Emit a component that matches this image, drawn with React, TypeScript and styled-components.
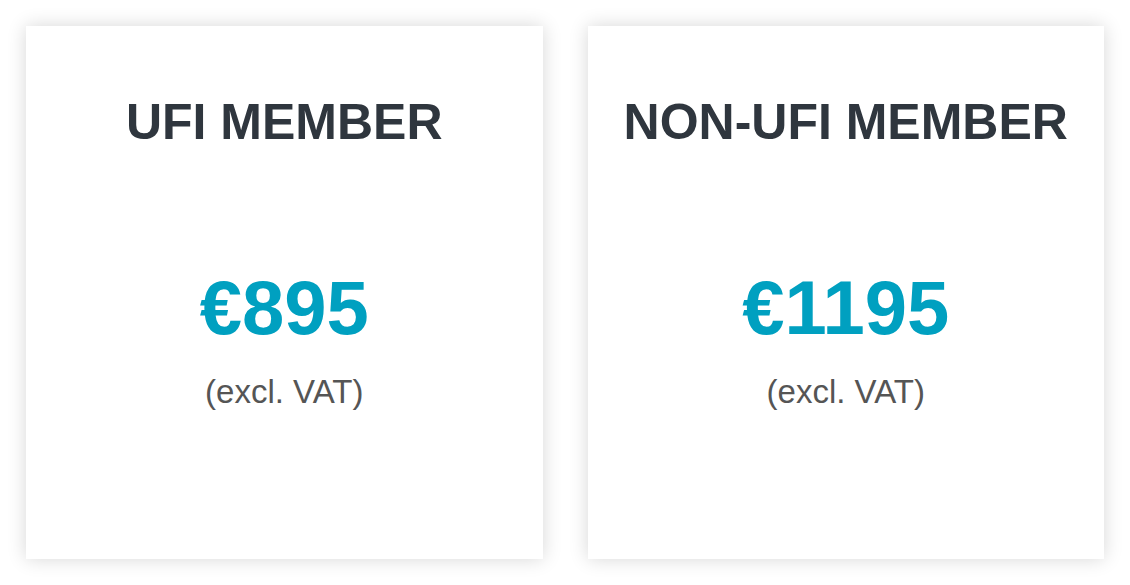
import React from 'react'
import styled, { createGlobalStyle } from 'styled-components'

const GlobalStyle = createGlobalStyle`
  body {
    margin: 0;
    background: #fff;
    font-family: "Liberation Sans", Arial, sans-serif;
  }
`

const Page = styled.div`
  display: flex;
  gap: 45px;
  padding: 26px;
`

const Card = styled.div`
  width: 517px;
  height: 533px;
  box-sizing: border-box;
  background: #fff;
  box-shadow: 0 0 18px rgba(0, 0, 0, 0.16);
  display: flex;
  flex-direction: column;
  align-items: center;
  padding-top: 66px;
`

const Title = styled.h2`
  margin: 0;
  font-size: 50px;
  line-height: 60px;
  font-weight: 700;
  color: #2f363e;
`

const Price = styled.div`
  margin-top: 110px;
  font-size: 76px;
  line-height: 91px;
  font-weight: 700;
  color: #00a0c0;
`

const Note = styled.div`
  margin-top: 20px;
  font-size: 33px;
  line-height: 38px;
  color: #555;
`

const plans = [
  { name: 'UFI MEMBER', price: '€895' },
  { name: 'NON-UFI MEMBER', price: '€1195' },
]

const App = () => {
  return (
    <>
      <GlobalStyle />
      <Page>
        {plans.map(plan => (
          <Card key={plan.name}>
            <Title>{plan.name}</Title>
            <Price>{plan.price}</Price>
            <Note>(excl. VAT)</Note>
          </Card>
        ))}
      </Page>
    </>
  )
}

export default App
